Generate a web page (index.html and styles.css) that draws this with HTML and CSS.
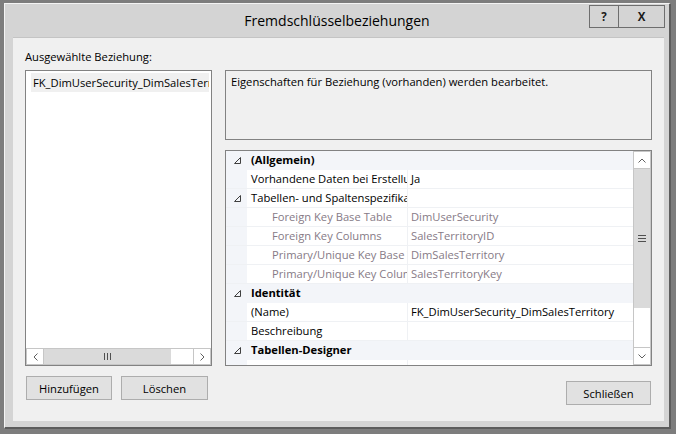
FILE: index.html
```html
<!DOCTYPE html>
<html lang="de">
<head>
<meta charset="utf-8">
<title>Fremdschlüsselbeziehungen</title>
<link rel="stylesheet" href="styles.css">
</head>
<body>
<div class="window">
  <div class="titlebar">
    <div></div>
    <div class="title">Fremdschlüsselbeziehungen</div>
    <div class="tbtns">
      <div class="tbtn help">?</div>
      <div class="tbtn close">X</div>
    </div>
  </div>
  <div class="content">
    <div class="label">Ausgewählte Beziehung:</div>
    <div></div>

    <div class="listbox">
      <div class="list-items">
        <div class="item">FK_DimUserSecurity_DimSalesTerritory</div>
      </div>
      <div class="hscroll">
        <div class="sbtn hbtn">
          <svg width="5" height="8" viewBox="0 0 5 8"><polyline points="4.5,0.5 1,4 4.5,7.5" fill="none" stroke="#606060" stroke-width="1"/></svg>
        </div>
        <div class="hthumb">
          <svg width="7" height="7" viewBox="0 0 7 7"><path d="M0.5 0v7M3.5 0v7M6.5 0v7" stroke="#505050" stroke-width="1"/></svg>
        </div>
        <div class="htrack"></div>
        <div class="sbtn hbtn">
          <svg width="5" height="8" viewBox="0 0 5 8"><polyline points="0.5,0.5 4,4 0.5,7.5" fill="none" stroke="#606060" stroke-width="1"/></svg>
        </div>
      </div>
    </div>

    <div class="rightcol">
      <div class="desc">Eigenschaften für Beziehung (vorhanden) werden bearbeitet.</div>
      <div class="pgrid">
        <div class="rows">
          <div class="row cat">
            <div class="gut"><svg class="exp" width="7" height="7" viewBox="0 0 7 7"><path d="M6.5 0.5V6.5H0.5Z" fill="none" stroke="#404040"/></svg></div>
            <div class="cname">(Allgemein)</div>
          </div>
          <div class="row">
            <div class="gut"></div>
            <div class="name">Vorhandene Daten bei Erstellung oder erneuter Aktivierung überprüfen</div>
            <div class="val">Ja</div>
          </div>
          <div class="row">
            <div class="gut"><svg class="exp" width="7" height="7" viewBox="0 0 7 7"><path d="M6.5 0.5V6.5H0.5Z" fill="none" stroke="#404040"/></svg></div>
            <div class="name">Tabellen- und Spaltenspezifikation</div>
            <div class="val"></div>
          </div>
          <div class="row ro">
            <div class="gut"></div>
            <div class="name sub">Foreign Key Base Table</div>
            <div class="val">DimUserSecurity</div>
          </div>
          <div class="row ro">
            <div class="gut"></div>
            <div class="name sub">Foreign Key Columns</div>
            <div class="val">SalesTerritoryID</div>
          </div>
          <div class="row ro">
            <div class="gut"></div>
            <div class="name sub">Primary/Unique Key Base Table</div>
            <div class="val">DimSalesTerritory</div>
          </div>
          <div class="row ro">
            <div class="gut"></div>
            <div class="name sub">Primary/Unique Key Columns</div>
            <div class="val">SalesTerritoryKey</div>
          </div>
          <div class="row cat">
            <div class="gut"><svg class="exp" width="7" height="7" viewBox="0 0 7 7"><path d="M6.5 0.5V6.5H0.5Z" fill="none" stroke="#404040"/></svg></div>
            <div class="cname">Identität</div>
          </div>
          <div class="row">
            <div class="gut"></div>
            <div class="name">(Name)</div>
            <div class="val">FK_DimUserSecurity_DimSalesTerritory</div>
          </div>
          <div class="row">
            <div class="gut"></div>
            <div class="name">Beschreibung</div>
            <div class="val"></div>
          </div>
          <div class="row cat">
            <div class="gut"><svg class="exp" width="7" height="7" viewBox="0 0 7 7"><path d="M6.5 0.5V6.5H0.5Z" fill="none" stroke="#404040"/></svg></div>
            <div class="cname">Tabellen-Designer</div>
          </div>
          <div class="row">
            <div class="gut"></div>
            <div class="name">Erzwingen für INSERT und UPDATE</div>
            <div class="val">Ja</div>
          </div>
        </div>
        <div class="vscroll">
          <div class="sbtn vbtn">
            <svg width="8" height="5" viewBox="0 0 8 5"><polyline points="0.5,4.5 4,1 7.5,4.5" fill="none" stroke="#606060" stroke-width="1"/></svg>
          </div>
          <div class="vthumb">
            <svg width="8" height="7" viewBox="0 0 8 7"><path d="M0 0.5h8M0 3.5h8M0 6.5h8" stroke="#505050" stroke-width="1"/></svg>
          </div>
          <div class="vtrack"></div>
          <div class="sbtn vbtn">
            <svg width="8" height="5" viewBox="0 0 8 5"><polyline points="0.5,0.5 4,4 7.5,0.5" fill="none" stroke="#606060" stroke-width="1"/></svg>
          </div>
        </div>
      </div>
    </div>

    <div class="lbtns">
      <div class="btn b-add">Hinzufügen</div>
      <div class="btn b-del">Löschen</div>
    </div>
    <div class="rbtns">
      <div class="btn b-close">Schließen</div>
    </div>
  </div>
</div>
</body>
</html>
```

FILE: styles.css
```css
html, body {
  margin: 0;
  padding: 0;
}
body {
  width: 676px;
  height: 434px;
  overflow: hidden;
  background: #7d7d7d;
  font-family: "Open Sans", "Noto Sans", sans-serif;
  font-size: 11.2px;
  color: #000;
}
.window {
  margin: 3px 0 0 4px;
  width: 664px;
  height: 423px;
  border-left: 1px solid #f4f4f4;
  border-top: 1px solid #f4f4f4;
  border-right: 2px solid #5c5c5c;
  border-bottom: 2px solid #5c5c5c;
  background: #d4d4d4;
  display: flex;
  flex-direction: column;
}
.titlebar {
  height: 33px;
  flex: 0 0 33px;
  display: grid;
  grid-template-columns: 1fr auto 1fr;
  align-items: start;
}
.title {
  padding-top: 7px;
  line-height: 20px;
  font-size: 14px;
  color: #000;
  white-space: nowrap;
}
.tbtns {
  justify-self: end;
  display: flex;
  margin: 1px 4px 0 0;
}
.tbtn {
  height: 21px;
  border: 1px solid #6e6e6e;
  display: flex;
  align-items: center;
  justify-content: center;
  font-weight: 700;
  font-size: 11.5px;
  color: #1a1a1a;
}
.help {
  width: 28px;
}
.close {
  width: 45px;
  border-left: none;
}
.content {
  flex: 1;
  margin: 0 5px 6px 8px;
  background: #f0f0f0;
  border-top: 1px solid #c4c4c4;
  padding: 11px 12px 0 12px;
  display: grid;
  grid-template-columns: 187px 1fr;
  grid-template-rows: 21px 296px auto;
  column-gap: 13px;
}
.label {
  line-height: 16px;
}
.listbox {
  border: 1px solid #828282;
  background: #fff;
  display: flex;
  flex-direction: column;
  min-width: 0;
}
.list-items {
  flex: 1;
  padding: 2px 2px 0 5px;
  overflow: hidden;
}
.item {
  height: 19px;
  line-height: 19px;
  padding-left: 2px;
  background: #f0f0f0;
  white-space: nowrap;
  overflow: hidden;
}
.hscroll {
  height: 17px;
  flex: 0 0 17px;
  display: flex;
  background: #fff;
}
.sbtn {
  box-sizing: border-box;
  background: #fff;
  border: 1px solid #c6c6c6;
  display: flex;
  align-items: center;
  justify-content: center;
}
.hbtn {
  width: 18px;
}
.hthumb {
  flex: 0 0 127px;
  background: #dadada;
  border-top: 1px solid #c6c6c6;
  border-bottom: 1px solid #c6c6c6;
  box-sizing: border-box;
  display: flex;
  align-items: center;
  justify-content: center;
}
.htrack {
  flex: 1;
  border-top: 1px solid #c6c6c6;
  border-bottom: 1px solid #c6c6c6;
}
.rightcol {
  display: flex;
  flex-direction: column;
  gap: 10px;
  min-width: 0;
}
.desc {
  height: 70px;
  box-sizing: border-box;
  border: 1px solid #828282;
  background: #f0f0f0;
  padding: 3px 5px;
  line-height: 16px;
}
.pgrid {
  height: 216px;
  box-sizing: border-box;
  border: 1px solid #828282;
  background: #fff;
  display: flex;
}
.rows {
  flex: 1;
  overflow: hidden;
  min-width: 0;
}
.row {
  height: 19px;
  box-sizing: border-box;
  border-bottom: 1px solid #eff1f4;
  display: grid;
  grid-template-columns: 21px 161px 1fr;
  line-height: 18px;
  white-space: nowrap;
}
.gut {
  background: #f3f5f9;
  display: flex;
  align-items: center;
  padding-left: 8px;
}
.exp {
  display: block;
}
.row.cat {
  background: #f3f5f9;
  border-bottom-color: #f3f5f9;
}
.cname {
  grid-column: 2 / 4;
  padding-left: 4px;
  font-weight: 700;
}
.name {
  padding-left: 4px;
  border-right: 1px solid #eff1f4;
  overflow: hidden;
}
.name.sub {
  padding-left: 25px;
}
.val {
  padding-left: 3px;
  overflow: hidden;
}
.row.ro .name,
.row.ro .val {
  color: #867a86;
}
.vscroll {
  width: 18px;
  flex: 0 0 18px;
  display: flex;
  flex-direction: column;
  background: #fff;
}
.vbtn {
  height: 18px;
}
.vthumb {
  height: 139px;
  background: #dadada;
  border-left: 1px solid #c6c6c6;
  border-right: 1px solid #c6c6c6;
  box-sizing: border-box;
  display: flex;
  align-items: center;
  justify-content: center;
}
.vtrack {
  flex: 1;
  border-left: 1px solid #c6c6c6;
  border-right: 1px solid #c6c6c6;
}
.lbtns {
  display: flex;
  gap: 9px;
  margin: 10px 0 0 1px;
  align-items: flex-start;
}
.rbtns {
  display: flex;
  justify-content: flex-end;
  margin: 15px 1px 0 0;
  align-items: flex-start;
}
.btn {
  box-sizing: border-box;
  height: 24px;
  border: 1px solid #adadad;
  background: #e1e1e1;
  display: flex;
  align-items: center;
  justify-content: center;
}
.b-add {
  width: 86px;
}
.b-del {
  width: 87px;
}
.b-close {
  width: 85px;
}
```
